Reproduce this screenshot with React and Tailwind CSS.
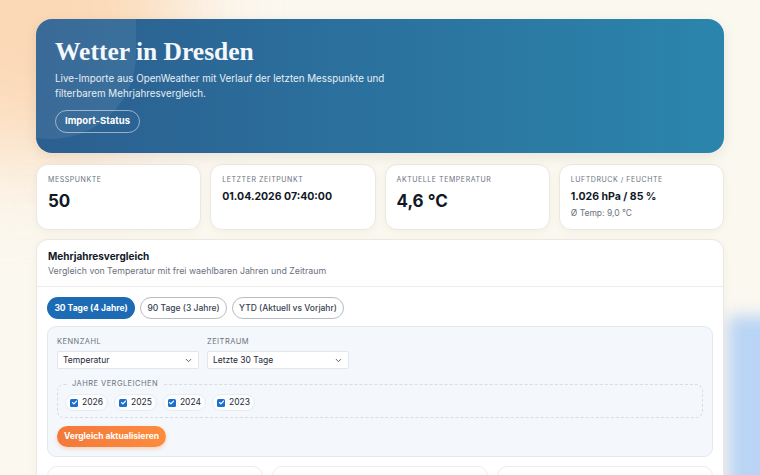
import React from "react";

const sans = { fontFamily: "Inter, 'Noto Sans', sans-serif" };

function Stat({ label, children }) {
  return (
    <div className="bg-white rounded-[12px] border border-[#ebe8e2] shadow-[0_2px_8px_rgba(0,0,0,0.04)] h-[66px] px-[11px] pt-[11px]">
      <div className="text-[7px] tracking-[0.08em] uppercase text-[#6b7280] leading-none">{label}</div>
      {children}
    </div>
  );
}

function Chevron() {
  return (
    <svg width="9" height="9" viewBox="0 0 24 24" fill="none" stroke="#374151" strokeWidth="2.2" strokeLinecap="round" strokeLinejoin="round">
      <path d="M6 9l6 6 6-6" />
    </svg>
  );
}

function Check() {
  return (
    <span className="w-[8px] h-[8px] rounded-[1.5px] bg-[#1a6fd0] flex items-center justify-center">
      <svg width="7" height="7" viewBox="0 0 24 24" fill="none" stroke="white" strokeWidth="4" strokeLinecap="round" strokeLinejoin="round">
        <path d="M5 12l5 5 9-10" />
      </svg>
    </span>
  );
}

export default function App() {
  return (
    <div className="relative w-[760px] h-[475px] overflow-hidden bg-[#fbf8f0]" style={sans}>
      <div className="absolute -left-[120px] -top-[140px] w-[300px] h-[300px] rounded-full bg-[#fcd5b0] blur-[50px] opacity-90" />
      <div className="absolute left-[728px] top-[316px] w-[120px] h-[220px] bg-[#b9d4f4] blur-[8px]" />
      <div className="relative w-[688px] mx-auto pt-[19px]">
        <div className="relative overflow-hidden rounded-[16px] h-[134px] bg-gradient-to-r from-[#2b5f90] to-[#2a85ac] shadow-[0_4px_14px_rgba(0,0,0,0.08)] px-[19px] pt-[18px]">
          <div className="absolute -left-[70px] -top-[80px] w-[170px] h-[200px] rounded-full bg-white/[0.07]" />
          <h1 className="relative text-[25.5px] font-bold text-[#f4f8fc] leading-[30px]" style={{ fontFamily: "'Liberation Serif', serif" }}>
            Wetter in Dresden
          </h1>
          <p className="relative mt-[4px] text-[9.8px] leading-[15px] text-[#e6eef6] w-[345px]">
            Live-Importe aus OpenWeather mit Verlauf der letzten Messpunkte und filterbarem Mehrjahresvergleich.
          </p>
          <button className="relative mt-[9px] h-[23px] px-[9px] rounded-full border border-white/50 text-[9.5px] font-bold text-white">
            Import-Status
          </button>
        </div>

        <div className="grid grid-cols-4 gap-[9px] mt-[11px]">
          <Stat label="Messpunkte">
            <div className="mt-[7px] text-[17px] font-bold text-[#111827] leading-[22px]">50</div>
          </Stat>
          <Stat label="Letzter Zeitpunkt">
            <div className="mt-[7px] text-[10.5px] font-bold text-[#111827] leading-[14px]">01.04.2026 07:40:00</div>
          </Stat>
          <Stat label="Aktuelle Temperatur">
            <div className="mt-[7px] text-[17px] font-bold text-[#111827] leading-[22px]">4,6 °C</div>
          </Stat>
          <Stat label="Luftdruck / Feuchte">
            <div className="mt-[7px] text-[10.5px] font-bold text-[#111827] leading-[14px]">1.026 hPa / 85 %</div>
            <div className="mt-[4px] text-[8.5px] text-[#6b7280] leading-[11px]">Ø Temp: 9,0 °C</div>
          </Stat>
        </div>

        <div className="mt-[9px] bg-white rounded-[12px] border border-[#ebe8e2] shadow-[0_2px_8px_rgba(0,0,0,0.04)]">
          <div className="px-[11px] pt-[9px] pb-[9px] border-b border-[#ececec]">
            <div className="text-[10px] font-bold text-[#111827] leading-[14px]">Mehrjahresvergleich</div>
            <div className="mt-[2px] text-[8.8px] text-[#6b7280] leading-[12px]">Vergleich von Temperatur mit frei waehlbaren Jahren und Zeitraum</div>
          </div>
          <div className="px-[10px] pt-[10px]">
            <div className="flex gap-[5px]">
              <button className="h-[22px] w-[88px] rounded-full bg-[#1d6ab5] text-white text-[8.5px] font-bold">30 Tage (4 Jahre)</button>
              <button className="h-[22px] w-[87px] rounded-full border border-[#b8bcc2] text-[#374151] text-[8.5px] font-medium">90 Tage (3 Jahre)</button>
              <button className="h-[22px] w-[112px] rounded-full border border-[#b8bcc2] text-[#374151] text-[8.5px] font-medium">YTD (Aktuell vs Vorjahr)</button>
            </div>
            <div className="mt-[7px] rounded-[9px] border border-[#e3e8ee] bg-[#f4f8fc] px-[9px] pt-[10px] pb-[9px]">
              <div className="flex gap-[8px]">
                <div className="w-[142px]">
                  <div className="text-[7.5px] tracking-[0.06em] uppercase text-[#6b7280] leading-[10px]">Kennzahl</div>
                  <div className="mt-[4px] h-[18px] bg-white border border-[#e3e6ea] rounded-[2px] flex items-center justify-between px-[5px]">
                    <span className="text-[8.5px] text-[#1f2937]">Temperatur</span>
                    <Chevron />
                  </div>
                </div>
                <div className="w-[142px]">
                  <div className="text-[7.5px] tracking-[0.06em] uppercase text-[#6b7280] leading-[10px]">Zeitraum</div>
                  <div className="mt-[4px] h-[18px] bg-white border border-[#e3e6ea] rounded-[2px] flex items-center justify-between px-[5px]">
                    <span className="text-[8.5px] text-[#1f2937]">Letzte 30 Tage</span>
                    <Chevron />
                  </div>
                </div>
              </div>
              <fieldset className="mt-[10px] border border-dashed border-[#d8dde3] rounded-[7px] px-[7px] pb-[6px] pt-[5px]">
                <legend className="ml-[3px] px-[4px] text-[7.5px] tracking-[0.06em] uppercase text-[#6b7280] leading-[10px]">Jahre vergleichen</legend>
                <div className="flex gap-[6px]">
                  {["2026", "2025", "2024", "2023"].map((y) => (
                    <label key={y} className="h-[17px] px-[4px] rounded-full bg-white/70 border border-[#e8ebef] flex items-center gap-[4px]">
                      <Check />
                      <span className="text-[8.5px] text-[#1f2937]">{y}</span>
                    </label>
                  ))}
                </div>
              </fieldset>
              <button className="mt-[8px] h-[21px] px-[7px] rounded-full bg-gradient-to-r from-[#f2793a] to-[#fd8c3e] text-white text-[8.5px] font-bold shadow-[0_2px_4px_rgba(242,121,58,0.3)]">
                Vergleich aktualisieren
              </button>
            </div>
            <div className="grid grid-cols-3 gap-[9px] mt-[9px]">
              <div className="h-[40px] rounded-t-[10px] border border-[#ececec] bg-white" />
              <div className="h-[40px] rounded-t-[10px] border border-[#ececec] bg-white" />
              <div className="h-[40px] rounded-t-[10px] border border-[#ececec] bg-white" />
            </div>
          </div>
        </div>
      </div>
    </div>
  );
}
